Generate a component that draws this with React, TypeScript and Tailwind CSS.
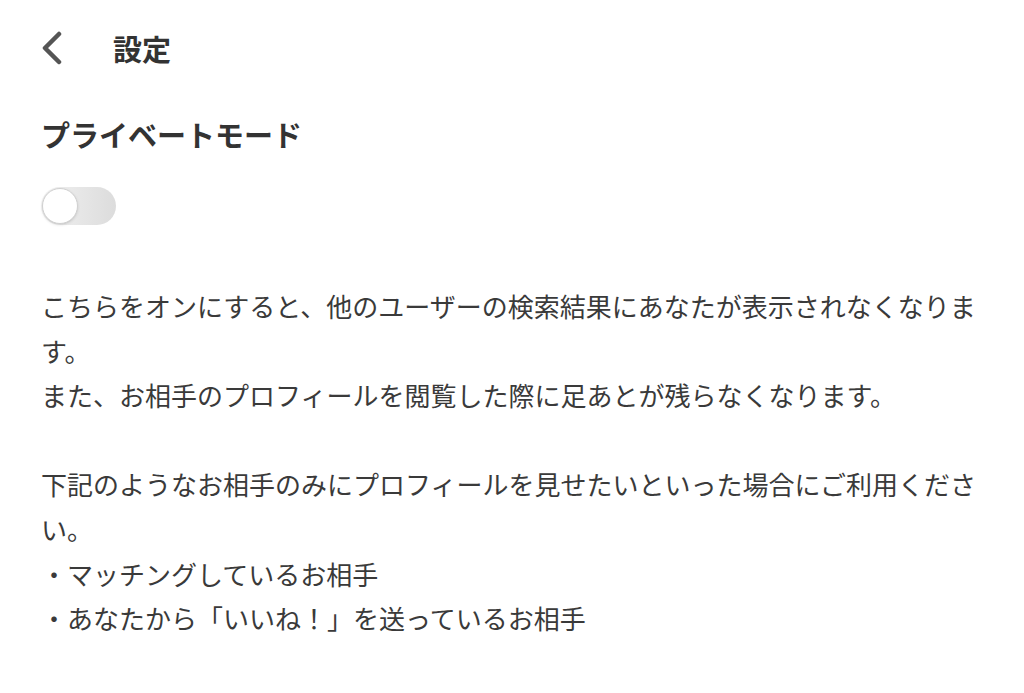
import React, { useState } from "react";

const font = { fontFamily: '"Noto Sans CJK JP", "Noto Sans", sans-serif' };

const App: React.FC = () => {
  const [on, setOn] = useState(false);

  return (
    <div className="min-h-[693px] bg-white px-[41px] text-[#333333]" style={font}>
      <header className="flex h-[96px] items-center">
        <button className="flex h-[40px] w-[40px] items-center" aria-label="戻る">
          <svg width="24" height="34" viewBox="0 0 24 34" fill="none">
            <path d="M18 3 L4 17 L18 31" stroke="#555555" strokeWidth="4.5" strokeLinecap="round" strokeLinejoin="round" />
          </svg>
        </button>
        <h1 className="ml-[32px] text-[29px] font-bold leading-none">設定</h1>
      </header>

      <h2 className="mt-[24px] text-[29px] font-bold leading-none">プライベートモード</h2>

      <button
        onClick={() => setOn(!on)}
        className={`mt-[38px] flex h-[38px] w-[75px] items-center rounded-full p-[1px] ${on ? "bg-[#4cd964]" : "bg-gradient-to-r from-[#f2f2f2] to-[#dcdcdc]"}`}
      >
        <span className={`h-[36px] w-[36px] rounded-full border border-[#d0d0d0] bg-white shadow-sm ${on ? "ml-auto" : ""}`} />
      </button>

      <div className="mt-[59px] text-[26px] leading-[44.6px] text-[#3a3a3a]">
        <p>こちらをオンにすると、他のユーザーの検索結果にあなたが表示されなくなります。</p>
        <p>また、お相手のプロフィールを閲覧した際に足あとが残らなくなります。</p>
        <p className="mt-[44.6px]">下記のようなお相手のみにプロフィールを見せたいといった場合にご利用ください。</p>
        <p>・マッチングしているお相手</p>
        <p>・あなたから「いいね！」を送っているお相手</p>
      </div>
    </div>
  );
};

export default App;
